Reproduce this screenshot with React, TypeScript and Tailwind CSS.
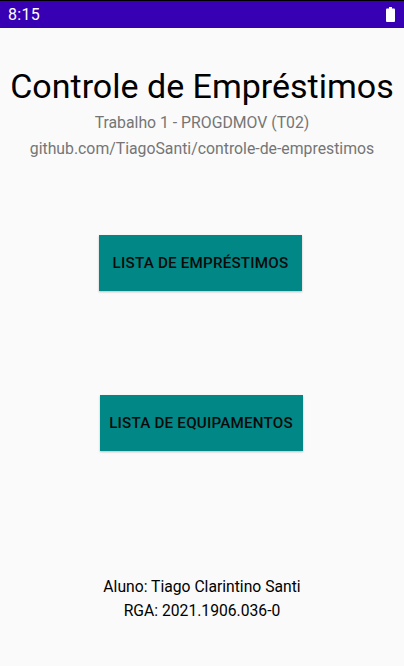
import React from 'react'

function StatusBar() {
  return (
    <div className="h-[28px] bg-[#3700b3] border-t border-black flex items-center justify-between pl-[8px] pr-[9px]">
      <span className="text-white text-[16px] leading-none tracking-[0.3px]">8:15</span>
      <svg width="9" height="15" viewBox="0 0 9 15">
        <rect x="3" y="0" width="3" height="2" fill="#fff" />
        <rect x="0" y="1.5" width="9" height="13.5" rx="1" fill="#fff" />
      </svg>
    </div>
  )
}

export default function App() {
  return (
    <div className="w-[404px] h-[666px] bg-[#fafafa] flex flex-col font-['Roboto',sans-serif] overflow-hidden">
      <StatusBar />

      <div className="flex flex-col items-center">
        <h1 className="mt-[38px] text-[34px] leading-[40px] text-black font-normal">Controle de Empréstimos</h1>
        <p className="mt-[4px] text-[15.8px] leading-[26px] text-[#757575]">Trabalho 1 - PROGDMOV (T02)</p>
        <p className="text-[15.8px] leading-[26px] text-[#757575]">github.com/TiagoSanti/controle-de-emprestimos</p>

        <button className="mt-[73px] mr-[3px] w-[203px] h-[56px] bg-[#018786] text-[#0a0a0a] text-[15.2px] font-medium tracking-[0.2px] shadow-[0_1px_2px_rgba(0,0,0,0.25)]">
          LISTA DE EMPRÉSTIMOS
        </button>
        <button className="mt-[104px] mr-[2px] w-[203px] h-[56px] bg-[#018786] text-[#0a0a0a] text-[15.2px] font-medium tracking-[0.2px] shadow-[0_1px_2px_rgba(0,0,0,0.25)]">
          LISTA DE EQUIPAMENTOS
        </button>

        <p className="mt-[124px] text-[15.7px] leading-[24px] text-black">Aluno: Tiago Clarintino Santi</p>
        <p className="text-[15.7px] leading-[24px] text-black">RGA: 2021.1906.036-0</p>
      </div>
    </div>
  )
}
